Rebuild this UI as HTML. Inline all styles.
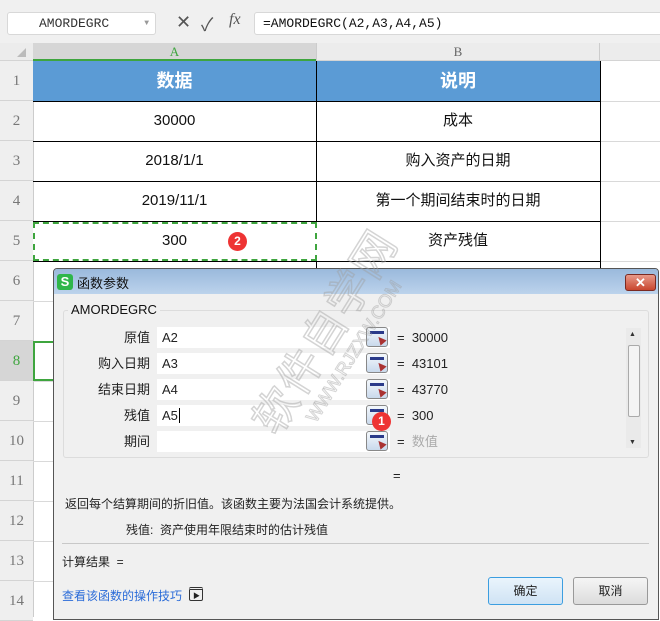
<!DOCTYPE html>
<html><head><meta charset="utf-8"><style>
*{margin:0;padding:0;box-sizing:border-box}
body{width:660px;height:617px;overflow:hidden;position:relative;background:#fff;font-family:"Liberation Sans","Noto Sans CJK SC",sans-serif;font-size:13px;color:#222}
.a{position:absolute}
.mono{font-family:"Liberation Mono","Noto Sans CJK SC",monospace}
.rh{position:absolute;left:0;width:33px;height:40px;text-align:center;line-height:40px;color:#777;font-size:15px;font-family:"Liberation Serif",serif;border-bottom:1px solid #d4d4d4;background:#efefef}
.hl{position:absolute;height:1px;background:#d9d9d9}
.cell{position:absolute;text-align:center;font-size:15px;color:#111;height:40px;line-height:40px}
.lbl{position:absolute;width:100px;left:50px;text-align:right;font-size:13px;color:#222;line-height:21px}
.inp{position:absolute;left:157px;width:233px;height:21px;background:#fff;font-size:13px;line-height:21px;padding-left:5px}
.btn{position:absolute;left:366px;width:22px;height:20px;border:1px solid #888;border-radius:3px;background:linear-gradient(#f4f8fc,#c9d9ec)}
.btn:before{content:"";position:absolute;left:3px;top:3px;width:14px;height:3px;background:#2a3a8a}
.btn:after{content:"";position:absolute;left:10px;top:8px;width:0;height:0;border-left:4px solid transparent;border-right:4px solid transparent;border-bottom:8px solid #a33;transform:rotate(-40deg)}
.eq{position:absolute;left:397px;font-size:13px;line-height:21px}
</style></head><body>
<div class="a" style="left:0;top:0;width:660px;height:43px;background:#f0f0f0"></div>
<div class="a mono" style="left:7px;top:12px;width:149px;height:23px;background:#fff;border:1px solid #d8d8d8;border-radius:3px;font-size:13px;line-height:21px;padding-left:31px;color:#333">AMORDEGRC<span style="position:absolute;right:6px;top:0;font-size:8px;color:#999">▼</span></div>
<div class="a" style="left:176px;top:12px;font-size:18px;color:#555">✕</div>
<div class="a" style="left:201px;top:11px;font-size:18px;color:#555">✓</div>
<div class="a" style="left:229px;top:11px;font-size:16px;color:#555;font-style:italic;font-family:'Liberation Serif',serif">fx</div>
<div class="a mono" style="left:254px;top:12px;width:410px;height:23px;background:#fff;border:1px solid #d8d8d8;border-radius:3px;font-size:13px;line-height:21px;padding-left:8px;color:#111">=AMORDEGRC(A2,A3,A4,A5)</div>
<div class="a" style="left:0;top:43px;width:660px;height:18px;background:#ececec;border-bottom:1px solid #d4d4d4"></div>
<div class="a" style="left:33px;top:43px;width:283px;height:18px;background:#d6d6d6;border-bottom:2px solid #3ea53e;text-align:center;color:#3ea53e;font-family:'Liberation Serif',serif;font-size:13px;line-height:17px">A</div>
<div class="a" style="left:316px;top:43px;width:284px;height:18px;text-align:center;color:#666;font-family:'Liberation Serif',serif;font-size:13px;line-height:17px;border-left:1px solid #ccc;border-right:1px solid #ccc">B</div>
<div class="a" style="left:17px;top:48px;width:0;height:0;border-left:9px solid transparent;border-bottom:9px solid #bbb"></div>
<div class="rh" style="top:61px">1</div><div class="rh" style="top:101px">2</div><div class="rh" style="top:141px">3</div><div class="rh" style="top:181px">4</div><div class="rh" style="top:221px">5</div><div class="rh" style="top:261px">6</div><div class="rh" style="top:301px">7</div><div class="rh" style="top:341px;background:#d6d6d6;color:#3ea53e">8</div><div class="rh" style="top:381px">9</div><div class="rh" style="top:421px">10</div><div class="rh" style="top:461px">11</div><div class="rh" style="top:501px">12</div><div class="rh" style="top:541px">13</div><div class="rh" style="top:581px">14</div>
<div class="a" style="left:33px;top:61px;width:1px;height:556px;background:#ccc"></div>
<div class="hl" style="left:600px;top:101px;width:60px"></div><div class="hl" style="left:600px;top:141px;width:60px"></div><div class="hl" style="left:600px;top:181px;width:60px"></div><div class="hl" style="left:600px;top:221px;width:60px"></div><div class="hl" style="left:600px;top:261px;width:60px"></div>
<div class="hl" style="left:33px;top:301px;width:20px"></div><div class="hl" style="left:33px;top:381px;width:20px"></div><div class="hl" style="left:33px;top:421px;width:20px"></div><div class="hl" style="left:33px;top:461px;width:20px"></div><div class="hl" style="left:33px;top:501px;width:20px"></div><div class="hl" style="left:33px;top:541px;width:20px"></div><div class="hl" style="left:33px;top:581px;width:20px"></div>
<div class="a" style="left:33px;top:61px;width:567px;height:40px;background:#5b9bd5"></div>
<div class="cell" style="left:33px;top:61px;width:283px;color:#fff;font-weight:bold;font-size:18px">数据</div>
<div class="cell" style="left:316px;top:61px;width:284px;color:#fff;font-weight:bold;font-size:18px">说明</div>
<div class="a" style="left:33px;top:101px;width:568px;height:1px;background:#000"></div>
<div class="a" style="left:33px;top:141px;width:568px;height:1px;background:#000"></div>
<div class="a" style="left:33px;top:181px;width:568px;height:1px;background:#000"></div>
<div class="a" style="left:33px;top:221px;width:568px;height:1px;background:#000"></div>
<div class="a" style="left:33px;top:261px;width:568px;height:1px;background:#000"></div>
<div class="a" style="left:316px;top:61px;width:1px;height:215px;background:#000"></div>
<div class="a" style="left:600px;top:61px;width:1px;height:215px;background:#000"></div>
<div class="cell" style="left:33px;top:101px;width:283px">30000</div>
<div class="cell" style="left:316px;top:101px;width:284px">成本</div>
<div class="cell" style="left:33px;top:141px;width:283px">2018/1/1</div>
<div class="cell" style="left:316px;top:141px;width:284px">购入资产的日期</div>
<div class="cell" style="left:33px;top:181px;width:283px">2019/11/1</div>
<div class="cell" style="left:316px;top:181px;width:284px">第一个期间结束时的日期</div>
<div class="a" style="left:33px;top:222px;width:284px;height:39px;border:2px dashed #3ea53e;background:#fff"></div>
<div class="cell" style="left:33px;top:221px;width:283px">300</div>
<div class="cell" style="left:316px;top:221px;width:284px">资产残值</div>
<div class="a" style="left:228px;top:232px;width:19px;height:19px;border-radius:50%;background:#ee3333;color:#fff;font-size:12px;text-align:center;line-height:19px;font-weight:bold">2</div>
<div class="a" style="left:33px;top:341px;width:20px;height:40px;border:2px solid #3ea53e;border-right:none"></div>
<div class="a" style="left:53px;top:268px;width:606px;height:352px;background:#f0f0f0;border:1px solid #555;border-radius:4px 4px 0 0;overflow:hidden">
 <div class="a" style="left:0;top:0;width:606px;height:25px;background:linear-gradient(#9ab9dc,#bcd3ec)"></div>
 <div class="a" style="left:3px;top:5px;width:16px;height:16px;background:#2fb64a;border-radius:3px;color:#fff;font-weight:bold;font-size:13px;line-height:16px;text-align:center">S</div>
 <div class="a" style="left:23px;top:4px;font-size:13px;color:#111">函数参数</div>
 <div class="a" style="left:571px;top:5px;width:31px;height:17px;border:1px solid #7a2a22;border-radius:3px;background:linear-gradient(#e89a8a,#c9462f);color:#fff;text-align:center;font-weight:bold;font-size:13px;line-height:15px">✕</div>
</div>
<div class="a" style="left:63px;top:310px;width:586px;height:148px;border:1px solid #dcdcdc;border-radius:3px"></div>
<div class="a" style="left:68px;top:302px;background:#f0f0f0;padding:0 3px;font-size:13px;color:#111">AMORDEGRC</div>
<div class="lbl" style="top:327px">原值</div><div class="inp" style="top:327px">A2</div><div class="btn" style="top:327px"></div><div class="eq" style="top:327px">=&nbsp; 30000</div>
<div class="lbl" style="top:353px">购入日期</div><div class="inp" style="top:353px">A3</div><div class="btn" style="top:353px"></div><div class="eq" style="top:353px">=&nbsp; 43101</div>
<div class="lbl" style="top:379px">结束日期</div><div class="inp" style="top:379px">A4</div><div class="btn" style="top:379px"></div><div class="eq" style="top:379px">=&nbsp; 43770</div>
<div class="lbl" style="top:405px">残值</div><div class="inp" style="top:405px">A5<span style="border-left:1px solid #000;margin-left:1px"></span></div><div class="btn" style="top:405px"></div><div class="eq" style="top:405px">=&nbsp; 300</div>
<div class="lbl" style="top:431px">期间</div><div class="inp" style="top:431px"></div><div class="btn" style="top:431px"></div><div class="eq" style="top:431px">=&nbsp; <span style="color:#aaa">数值</span></div>
<div class="a" style="left:372px;top:412px;width:19px;height:19px;border-radius:50%;background:#ee3333;color:#fff;font-size:12px;text-align:center;line-height:19px;font-weight:bold">1</div>
<div class="a" style="left:626px;top:328px;width:15px;height:120px;background:#eaeaea"></div>
<div class="a" style="left:628px;top:345px;width:12px;height:72px;background:#f4f4f4;border:1px solid #aaa;border-radius:2px"></div>
<div class="a" style="left:629px;top:331px;font-size:7px;color:#333">▲</div>
<div class="a" style="left:629px;top:439px;font-size:7px;color:#333">▼</div>
<div class="a" style="left:393px;top:468px;font-size:13px">=</div>
<div class="a" style="left:65px;top:495px;font-size:12px">返回每个结算期间的折旧值。该函数主要为法国会计系统提供。</div>
<div class="a" style="left:126px;top:521px;font-size:12px">残值:&nbsp; 资产使用年限结束时的估计残值</div>
<div class="a" style="left:62px;top:543px;width:587px;height:1px;background:#c8c8c8"></div>
<div class="a" style="left:62px;top:553px;font-size:12px">计算结果 &nbsp;=</div>
<div class="a" style="left:62px;top:587px;font-size:12px;color:#2a6bd8">查看该函数的操作技巧</div>
<div class="a" style="left:189px;top:587px;width:14px;height:14px;border:1px solid #333;border-radius:2px;border-top:3px double #333"><span style="position:absolute;left:3px;top:1px;font-size:7px">▶</span></div>
<div class="a" style="left:488px;top:577px;width:75px;height:28px;border:1px solid #3c9ee0;border-radius:3px;background:linear-gradient(#eaf4fc,#cfe3f4);text-align:center;line-height:26px;font-size:12px">确定</div>
<div class="a" style="left:573px;top:577px;width:75px;height:28px;border:1px solid #999;border-radius:3px;background:linear-gradient(#f5f5f5,#dcdcdc);text-align:center;line-height:26px;font-size:12px">取消</div>
<div class="a" style="left:200px;top:285px;width:260px;font-size:44px;color:transparent;-webkit-text-stroke:1.5px rgba(160,160,160,0.45);transform:rotate(-58deg);white-space:nowrap;letter-spacing:2px">软件自学网</div>
<div class="a" style="left:250px;top:300px;width:260px;font-size:18px;color:transparent;-webkit-text-stroke:1px rgba(160,160,160,0.45);transform:rotate(-58deg);white-space:nowrap">WWW.RJZXW.COM</div>
</body></html>
